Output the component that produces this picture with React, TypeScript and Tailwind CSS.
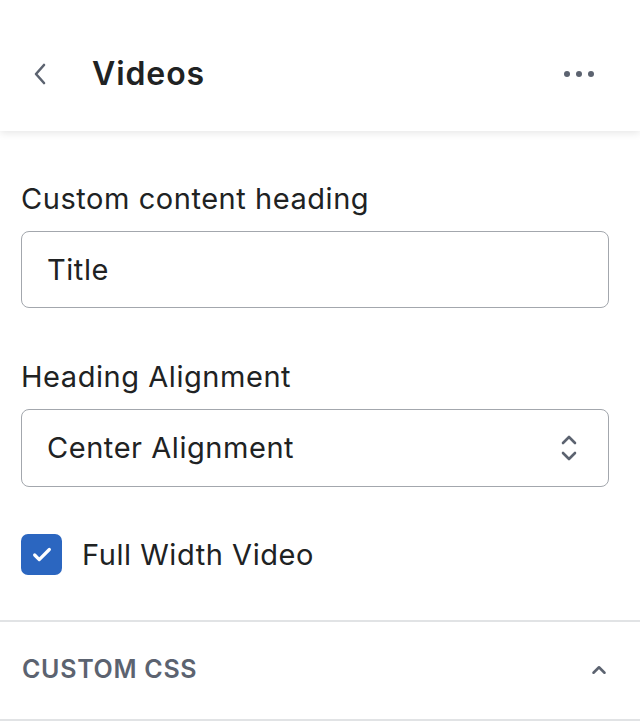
import { ChevronUp, Check } from 'lucide-react';

const font = { fontFamily: 'Inter, "Noto Sans", sans-serif' };

function BackChevron() {
  return (
    <svg width="14" height="22" viewBox="0 0 14 22" fill="none" stroke="#5c6370" strokeWidth="2.6" strokeLinecap="round" strokeLinejoin="round">
      <path d="M11 2 L3 11 L11 20" />
    </svg>
  );
}

function SelectArrows() {
  return (
    <svg width="18" height="28" viewBox="0 0 18 28" fill="none" stroke="#5c6370" strokeWidth="2.6" strokeLinecap="round" strokeLinejoin="round">
      <path d="M3 9 L9 3 L15 9" />
      <path d="M3 19 L9 25 L15 19" />
    </svg>
  );
}

export default function App() {
  return (
    <div className="h-[726px] w-[640px] overflow-hidden bg-white text-[#202223]" style={font}>
      <div className="relative z-10 flex h-[131px] items-center bg-white pt-[17px] shadow-[0_2px_8px_rgba(0,0,0,0.10)]">
        <span className="ml-[33px] flex">
          <BackChevron />
        </span>
        <h1 className="ml-[45px] text-[32px] font-semibold tracking-[0.9px]">Videos</h1>
        <div className="ml-auto mr-[46px] flex items-center gap-[6px]">
          <span className="h-[6px] w-[6px] rounded-full bg-[#5c6370]" />
          <span className="h-[6px] w-[6px] rounded-full bg-[#5c6370]" />
          <span className="h-[6px] w-[6px] rounded-full bg-[#5c6370]" />
        </div>
      </div>

      <div className="px-[21px] pt-[51px] text-[29px] tracking-[0.55px]">
        <label className="block leading-[34px]">Custom content heading</label>
        <div className="mt-[15px] flex h-[77px] w-[588px] items-center rounded-[8px] border border-[#a3a7ad] px-[25px]">
          Title
        </div>

        <label className="mt-[52px] block leading-[34px]">Heading Alignment</label>
        <div className="mt-[15px] flex h-[78px] w-[588px] items-center justify-between rounded-[8px] border border-[#a3a7ad] pl-[25px] pr-[30px]">
          <span>Center Alignment</span>
          <SelectArrows />
        </div>

        <div className="mt-[46px] flex items-center">
          <span className="flex h-[41px] w-[41px] items-center justify-center rounded-[7px] bg-[#2b66c0]">
            <Check className="h-[22px] w-[22px] text-white" strokeWidth={3.5} />
          </span>
          <span className="ml-[20px]">Full Width Video</span>
        </div>
      </div>

      <div className="mt-[43px] border-t-2 border-[#e1e3e5]" />
      <div className="flex h-[97px] items-center justify-between px-[22px]">
        <span className="text-[25px] font-semibold tracking-[0.7px] text-[#5c6370]">CUSTOM CSS</span>
        <ChevronUp className="mr-[8px] h-[22px] w-[22px] text-[#5c6370]" strokeWidth={2.8} />
      </div>
      <div className="border-t-2 border-[#e1e3e5]" />
    </div>
  );
}
